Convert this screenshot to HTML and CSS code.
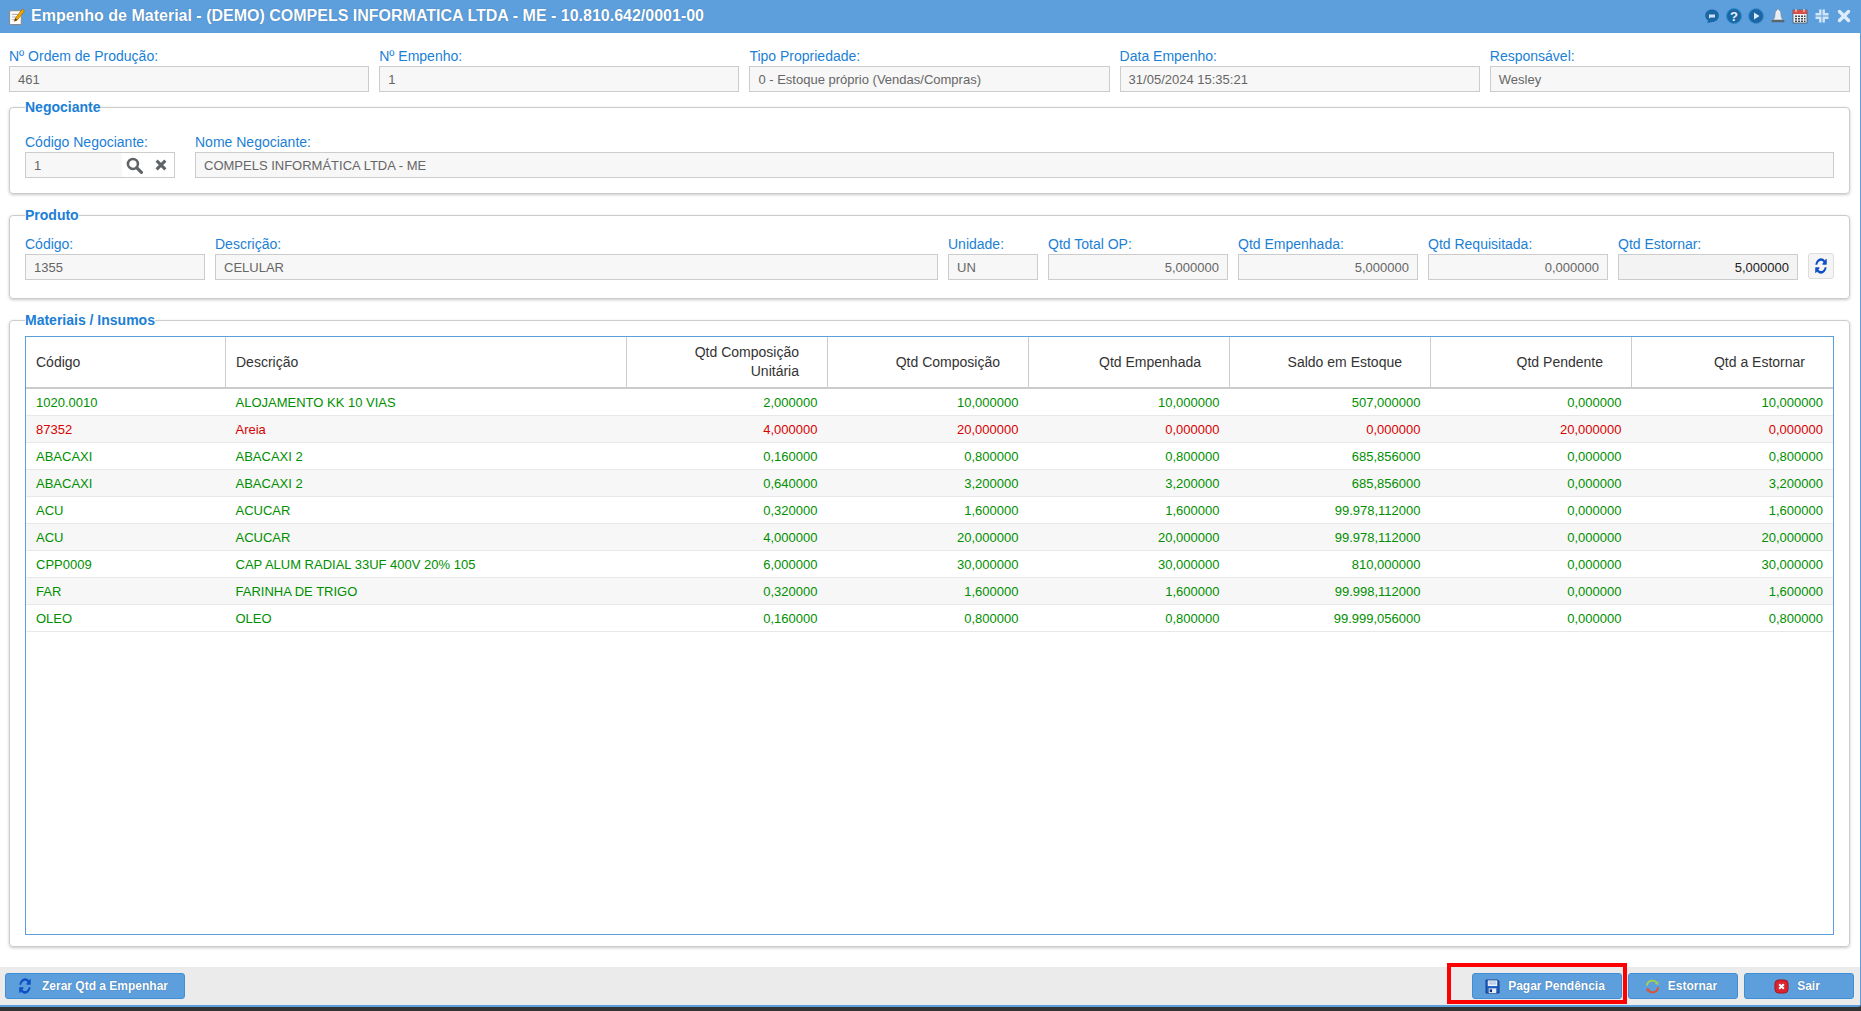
FILE: index.html
```html
<!DOCTYPE html>
<html lang="pt-BR">
<head>
<meta charset="utf-8">
<title>Empenho de Material</title>
<link rel="stylesheet" href="styles.css">
</head>
<body>
<svg class="defs" width="0" height="0" aria-hidden="true">
  <symbol id="refresh" viewBox="100 100 1600 1600" preserveAspectRatio="none"><path d="M1639 1056q0 5-1 7-64 268-268 434.5t-478 166.5q-146 0-282.5-55t-243.5-157l-129 129q-19 19-45 19t-45-19-19-45v-448q0-26 19-45t45-19h448q26 0 45 19t19 45-19 45l-137 137q71 66 161 102t187 36q134 0 250-65t186-179q11-17 53-117 8-23 30-23h192q13 0 22.5 9.5t9.5 22.5zm25-800v448q0 26-19 45t-45 19h-448q-26 0-45-19t-19-45 19-45l138-138q-148-137-349-137-134 0-250 65t-186 179q-11 17-53 117-8 23-30 23h-199q-13 0-22.5-9.5t-9.5-22.5v-7q65-268 270-434.5t480-166.5q146 0 284 55.5t245 156.5l130-129q19-19 45-19t45 19 19 45z"/></symbol>
</svg>
<div class="window">
  <header class="titlebar">
    <svg class="title-icon" viewBox="0 0 16 16"><rect x="1.5" y="2.500" width="11" height="13" rx="1" fill="#fff" stroke="#8a8a8a"/><path d="M3.500 6h6M3.500 8.500h4M3.500 11h3" stroke="#b5b5b5"/><path d="M6 12.500l1-3L13.500 1l2 1.800-6.700 8.400z" fill="#f2a900" stroke="#a86a00" stroke-width=".7"/><path d="M6 12.500l1-3 1.800 1.700z" fill="#5a3a10"/></svg>
    <h1 class="title">Empenho de Material - (DEMO) COMPELS INFORMATICA LTDA - ME - 10.810.642/0001-00</h1>
    <div class="title-tools">
      <svg class="tool" viewBox="0 0 16 16"><path d="M8 1.500c3.800 0 6.800 2.500 6.800 6 0 4-3 6.500-6.800 6.500-1.500 0-3 .8-5 1 .6-.8 1-1.700 1-2.500C2.300 11.300 1.200 9.600 1.200 7.500c0-3.500 3-6 6.800-6z" fill="#1b67a6"/><path d="M5 6.500h6v3H6.500l-1.500 1z" fill="#cfe3f5"/></svg>
      <svg class="tool" viewBox="0 0 16 16"><circle cx="8" cy="8" r="7.500" fill="#1b67a6" stroke="#2f8ccf"/><text x="8" y="12.600" class="tool-q">?</text></svg>
      <svg class="tool" viewBox="0 0 16 16"><circle cx="8" cy="8" r="7.500" fill="#1b67a6" stroke="#3f8fce"/><path d="M6 4.500v7L11.500 8z" fill="#d8e9f7"/></svg>
      <svg class="tool" viewBox="0 0 16 16"><path d="M8 1c-.8 0-1 .6-1 1C5.500 2.800 5 4.400 5 6.500c0 2.500-1 4.500-2 5.500h10c-1-1-2-3-2-5.500 0-2.100-.5-3.700-2-4.500 0-.4-.2-1-1-1z" fill="#e9eef2" stroke="#7d8b96" stroke-width=".7"/><rect x="1.500" y="12" width="13" height="2.200" rx="1" fill="#59656e"/></svg>
      <svg class="tool" viewBox="0 0 16 16"><rect x="1" y="2" width="14" height="13" fill="#eef1f4" stroke="#4d5a66" stroke-width=".8"/><rect x="1" y="2" width="14" height="4" fill="#d9504a"/><path d="M4 1v3M12 1v3" stroke="#eee"/><path d="M3 7.500h2V9H3zM6 7.500h2V9H6zM9 7.500h2V9H9zM12 7.500h1.500V9H12zM3 10h2v1.500H3zM6 10h2v1.500H6zM9 10h2v1.500H9zM12 10h1.500v1.500H12zM3 12.500h2V14H3zM6 12.500h2V14H6zM9 12.500h2V14H9zM12 12.500h1.500V14H12z" fill="#3e4b57"/></svg>
      <svg class="tool" viewBox="0 0 16 16"><path d="M6.300 1.500v4.800H1.500M9.700 1.500v4.800h4.800M6.300 14.500V9.700H1.500M9.700 14.500V9.700h4.800" fill="none" stroke="#d3e6f6" stroke-width="2.400"/></svg>
      <svg class="tool" viewBox="0 0 16 16"><path d="M3.500 3.500l9 9M12.500 3.500l-9 9" stroke="#dcecf9" stroke-width="3.400" stroke-linecap="round"/></svg>
    </div>
  </header>

  <main class="content">
    <div class="row row-top">
      <div class="field w-fill"><label class="lbl">Nº Ordem de Produção:</label><div class="inp">461</div></div>
      <div class="field w-fill"><label class="lbl">Nº Empenho:</label><div class="inp">1</div></div>
      <div class="field w-fill"><label class="lbl">Tipo Propriedade:</label><div class="inp">0 - Estoque próprio (Vendas/Compras)</div></div>
      <div class="field w-fill"><label class="lbl">Data Empenho:</label><div class="inp">31/05/2024 15:35:21</div></div>
      <div class="field w-fill"><label class="lbl">Responsável:</label><div class="inp">Wesley</div></div>
    </div>

    <fieldset class="group group-neg">
      <legend class="legend">Negociante</legend>
      <div class="row row-gap20">
        <div class="field w-150"><label class="lbl">Código Negociante:</label>
          <div class="lookup">
            <div class="lookup-val">1</div>
            <svg class="lk-icon" viewBox="0 0 16 16"><circle cx="6.500" cy="6.500" r="4.700" fill="none" stroke="#5d6367" stroke-width="2.400"/><path d="M10 10l4.500 4.500" stroke="#5d6367" stroke-width="3" stroke-linecap="round"/></svg>
            <svg class="lk-icon lk-x" viewBox="0 0 16 16"><path d="M3 3l10 10M13 3L3 13" stroke="#5d6367" stroke-width="3.400"/></svg>
          </div>
        </div>
        <div class="field w-fill"><label class="lbl">Nome Negociante:</label><div class="inp">COMPELS INFORMÁTICA LTDA - ME</div></div>
      </div>
    </fieldset>

    <fieldset class="group group-prod">
      <legend class="legend">Produto</legend>
      <div class="row">
        <div class="field w-180"><label class="lbl">Código:</label><div class="inp">1355</div></div>
        <div class="field w-fill"><label class="lbl">Descrição:</label><div class="inp">CELULAR</div></div>
        <div class="field w-90"><label class="lbl">Unidade:</label><div class="inp">UN</div></div>
        <div class="field w-180"><label class="lbl">Qtd Total OP:</label><div class="inp num">5,000000</div></div>
        <div class="field w-180"><label class="lbl">Qtd Empenhada:</label><div class="inp num">5,000000</div></div>
        <div class="field w-180"><label class="lbl">Qtd Requisitada:</label><div class="inp num">0,000000</div></div>
        <div class="field w-180"><label class="lbl">Qtd Estornar:</label><div class="inp num strong">5,000000</div></div>
        <button class="icon-btn" type="button"><svg class="refresh-blue"><use href="#refresh"/></svg></button>
      </div>
    </fieldset>

    <fieldset class="group group-mat">
      <legend class="legend">Materiais / Insumos</legend>
      <div class="table-box">
        <table class="grid">
          <colgroup><col class="c1"><col class="c2"><col class="c3"><col class="c3"><col class="c4"><col class="c3"><col class="c3"><col class="c5"></colgroup>
          <thead>
            <tr><th class="l">Código</th><th class="l">Descrição</th><th>Qtd Composição<br>Unitária</th><th>Qtd Composição</th><th>Qtd Empenhada</th><th>Saldo em Estoque</th><th>Qtd Pendente</th><th>Qtd a Estornar</th></tr>
          </thead>
          <tbody>
            <tr class="ok"><td class="l">1020.0010</td><td class="l">ALOJAMENTO KK 10 VIAS</td><td>2,000000</td><td>10,000000</td><td>10,000000</td><td>507,000000</td><td>0,000000</td><td>10,000000</td></tr>
            <tr class="bad"><td class="l">87352</td><td class="l">Areia</td><td>4,000000</td><td>20,000000</td><td>0,000000</td><td>0,000000</td><td>20,000000</td><td>0,000000</td></tr>
            <tr class="ok"><td class="l">ABACAXI</td><td class="l">ABACAXI 2</td><td>0,160000</td><td>0,800000</td><td>0,800000</td><td>685,856000</td><td>0,000000</td><td>0,800000</td></tr>
            <tr class="ok"><td class="l">ABACAXI</td><td class="l">ABACAXI 2</td><td>0,640000</td><td>3,200000</td><td>3,200000</td><td>685,856000</td><td>0,000000</td><td>3,200000</td></tr>
            <tr class="ok"><td class="l">ACU</td><td class="l">ACUCAR</td><td>0,320000</td><td>1,600000</td><td>1,600000</td><td>99.978,112000</td><td>0,000000</td><td>1,600000</td></tr>
            <tr class="ok"><td class="l">ACU</td><td class="l">ACUCAR</td><td>4,000000</td><td>20,000000</td><td>20,000000</td><td>99.978,112000</td><td>0,000000</td><td>20,000000</td></tr>
            <tr class="ok"><td class="l">CPP0009</td><td class="l">CAP ALUM RADIAL 33UF 400V 20% 105</td><td>6,000000</td><td>30,000000</td><td>30,000000</td><td>810,000000</td><td>0,000000</td><td>30,000000</td></tr>
            <tr class="ok"><td class="l">FAR</td><td class="l">FARINHA DE TRIGO</td><td>0,320000</td><td>1,600000</td><td>1,600000</td><td>99.998,112000</td><td>0,000000</td><td>1,600000</td></tr>
            <tr class="ok"><td class="l">OLEO</td><td class="l">OLEO</td><td>0,160000</td><td>0,800000</td><td>0,800000</td><td>99.999,056000</td><td>0,000000</td><td>0,800000</td></tr>
          </tbody>
        </table>
      </div>
    </fieldset>
  </main>

  <footer class="actions">
    <button class="btn btn-zerar" type="button"><svg class="btn-icon refresh-blue"><use href="#refresh"/></svg>Zerar Qtd a Empenhar</button>
    <div class="actions-right">
      <div class="marked">
        <button class="btn btn-w150" type="button">
          <svg class="btn-icon" viewBox="0 0 16 16"><path d="M1 1h12.500L15 2.500V15H1z" fill="#1f5fc4" stroke="#14306e" stroke-width=".8"/><rect x="3" y="1.500" width="10" height="6" fill="#eef3fa"/><path d="M4 3.200h8M4 5.200h8" stroke="#9ab2d6"/><rect x="4" y="10" width="8" height="5" fill="#e6edf6"/><rect x="5" y="11" width="2.500" height="3" fill="#14306e"/></svg>
          Pagar Pendência
        </button>
        <span class="highlight"></span>
      </div>
      <button class="btn btn-w110" type="button">
        <svg class="btn-icon" viewBox="0 0 16 16"><path d="M2 7A6 6 0 0 1 13 4.500" fill="none" stroke="#a6d04a" stroke-width="2"/><path d="M14.500 2.500l-.5 4-3.500-1.500z" fill="#a6d04a"/><path d="M14 9A6 6 0 0 1 3 11.500" fill="none" stroke="#e2502c" stroke-width="2"/><path d="M1.500 13.500l.5-4 3.500 1.500z" fill="#e2502c"/></svg>
        Estornar
      </button>
      <button class="btn btn-w110" type="button">
        <svg class="btn-icon" viewBox="0 0 16 16"><rect x="1" y="1" width="14" height="14" rx="4" fill="#d9232e" stroke="#a51720"/><path d="M5.500 5.500l5 5M10.500 5.500l-5 5" stroke="#fff" stroke-width="2.200"/></svg>
        Sair
      </button>
    </div>
  </footer>
</div>
</body>
</html>
```

FILE: styles.css
```css
* { box-sizing: border-box; }
html, body { margin: 0; height: 100%; overflow: hidden; }
body { font-family: "Liberation Sans", Arial, sans-serif; font-size: 13px; background: #333; }
.defs { position: absolute; }

.window { height: 1007px; display: flex; flex-direction: column; background: #fff; border-right: 1px solid #5c9fdc; border-bottom: 2px solid #5c9fdc; border-bottom-right-radius: 3px; }

.titlebar { height: 33px; flex: none; display: flex; align-items: center; background: #5c9fdc; padding: 0 7px 1px 8px; }
.title-icon { width: 17px; height: 17px; flex: none; margin-right: 6px; }
.title { margin: 0; flex: 1; font-size: 16px; font-weight: bold; color: #fff; text-shadow: 0 0 1px rgba(20, 60, 110, .55); white-space: nowrap; }
.title-tools { display: flex; gap: 6px; align-items: center; padding-right: 1px; }
.tool { width: 16px; height: 16px; display: block; }
.tool-q { font-family: "Liberation Sans", sans-serif; font-size: 13px; font-weight: bold; fill: #e8f2fa; text-anchor: middle; }

.content { flex: 1; min-height: 0; display: flex; flex-direction: column; padding: 16px 10px 20px 9px; }
.row { display: flex; gap: 10px; align-items: flex-end; }
.row-gap20 { gap: 20px; }
.field { display: flex; flex-direction: column; min-width: 0; }
.w-fill { flex: 1; }
.w-150 { flex: 0 0 150px; }
.w-180 { flex: 0 0 180px; }
.w-90 { flex: 0 0 90px; }
.lbl { height: 17px; line-height: 15px; color: #1b7fd6; font-size: 14px; white-space: nowrap; }
.inp { height: 26px; line-height: 25px; padding: 0 8px; background: #f7f7f7; border: 1px solid #ccc; color: #666; font-size: 13px; white-space: nowrap; overflow: hidden; }
.num { text-align: right; }
.strong { color: #222; background: #f3f3f3; }

.lookup { height: 26px; display: flex; align-items: center; border: 1px solid #ccc; background: #fff; }
.lookup-val { width: 96px; height: 24px; line-height: 25px; padding: 0 8px; background: #f7f7f7; color: #666; font-size: 13px; }
.lk-icon { width: 17px; height: 17px; margin-left: 4px; }
.lk-x { width: 14px; height: 14px; margin-left: 11px; }

.group { margin: 8px 0 0; padding: 20px 15px 15px; min-width: 0; border: 1px solid #ccc; border-radius: 4px; box-shadow: 0 1px 3px rgba(0, 0, 0, .22); }
.group-prod { margin-top: 14px; padding: 14px 15px 18px; }
.group-mat { margin-top: 14px; flex: 1; min-height: 0; display: flex; flex-direction: column; padding: 8px 15px 11px; }
.legend { padding: 0; margin-left: 0; color: #1b7fd6; font-size: 14px; font-weight: bold; line-height: 15px; }

.icon-btn { flex: none; width: 26px; height: 26px; margin: 0 0 1px; padding: 0; display: flex; align-items: center; justify-content: center; background: #f5f5f5; border: 1px solid #ddd; border-radius: 3px; }
.refresh-blue { width: 12px; height: 16px; fill: #0d4fc4; }

.table-box { flex: 1; min-height: 0; border: 1px solid #5c9fdc; }
.grid { width: 100%; border-collapse: collapse; table-layout: fixed; font-size: 13px; }
.c1 { width: 199.500px; } .c2 { width: 401px; } .c3 { width: 201px; } .c4 { width: 201px; } .c5 { width: auto; }
.grid th { height: 51px; padding: 0 28px 0 10px; text-align: right; font-size: 14px; font-weight: normal; color: #333; line-height: 19px; border-right: 1px solid #ccc; border-bottom: 2px solid #ccc; }
.grid th:last-child { border-right: 0; }
.grid td { height: 27px; padding: 1px 10px 0 10px; text-align: right; border-bottom: 1px solid #e8e8e8; white-space: nowrap; }
.grid .l { text-align: left; }
.grid tbody tr:nth-child(even) { background: #f7f7f7; }
.ok { color: #008f00; }
.bad { color: #d80000; }

.actions { height: 38px; flex: none; display: flex; align-items: center; justify-content: space-between; padding: 0 6px 0 5px; background: #ebebeb; }
.actions-right { display: flex; gap: 6px; }
.marked { position: relative; display: flex; }
.highlight { position: absolute; left: -25px; right: -5px; top: -10px; bottom: -5px; border: 4px solid #f00; pointer-events: none; }
.btn { height: 26px; padding: 0 4px 0 0; display: flex; align-items: center; justify-content: center; gap: 8px; background: #5c9fdc; color: #fff; border: 1px solid #3f8fd6; border-radius: 3px; font-family: inherit; font-size: 12px; font-weight: bold; text-shadow: 0 0 1px rgba(20, 60, 110, .6); white-space: nowrap; }
.btn-zerar { width: 180px; padding: 0 3px 0 0; gap: 11px; }
.btn-w150 { width: 150px; }
.btn-w110 { width: 110px; }
.btn-icon { width: 15px; height: 15px; flex: none; }
.btn-zerar .btn-icon { width: 12px; height: 16px; }
```
